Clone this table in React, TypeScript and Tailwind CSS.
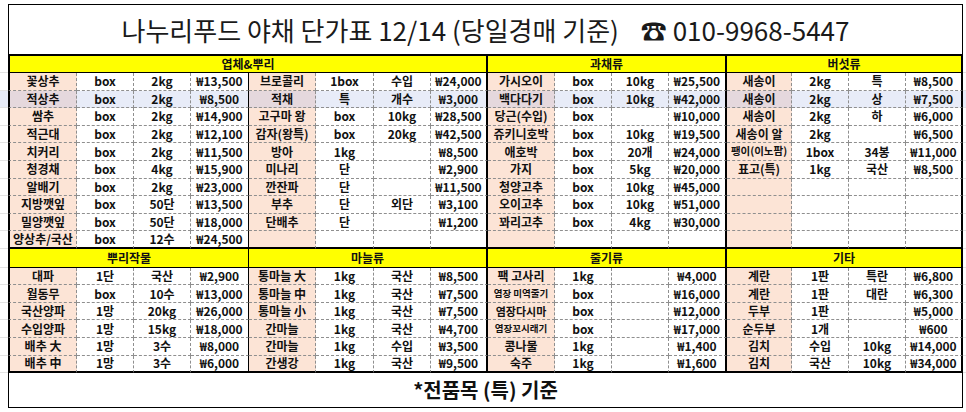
// price sheet – spreadsheet style
const W = [
  "w-[69px]", "w-[57px]", "w-[57px]", "w-[58px]",
  "w-[67px]", "w-[58px]", "w-[57px]", "w-[57px]",
  "w-[67px]", "w-[57px]", "w-[57px]", "w-[58px]",
  "w-[65px]", "w-[57px]", "w-[57px]", "w-[57px]",
];

const NAME_COLS = [0, 4, 8, 12];

// names that are squeezed into the cell with a smaller size
const SMALL: Record<string, string> = {
  "팽이(이노팜)": "text-[10.5px]",
  "염장 미역줄기": "text-[9.5px]",
  "염장꼬시래기": "text-[9.5px]",
  "염장다시마": "text-[11px]",
};

const top = [
  ["꽃상추", "box", "2kg", "₩13,500", "브로콜리", "1box", "수입", "₩24,000", "가시오이", "box", "10kg", "₩25,500", "새송이", "2kg", "특", "₩8,500"],
  ["적상추", "box", "2kg", "₩8,500", "적채", "특", "개수", "₩3,000", "백다다기", "box", "10kg", "₩42,000", "새송이", "2kg", "상", "₩7,500"],
  ["쌈추", "box", "2kg", "₩14,900", "고구마 왕", "box", "10kg", "₩28,500", "당근(수입)", "box", "", "₩10,000", "새송이", "2kg", "하", "₩6,000"],
  ["적근대", "box", "2kg", "₩12,100", "감자(왕특)", "box", "20kg", "₩42,500", "쥬키니호박", "box", "10kg", "₩19,500", "새송이 알", "2kg", "", "₩6,500"],
  ["치커리", "box", "2kg", "₩11,500", "방아", "1kg", "", "₩8,500", "애호박", "box", "20개", "₩24,000", "팽이(이노팜)", "1box", "34봉", "₩11,000"],
  ["청경채", "box", "4kg", "₩15,900", "미나리", "단", "", "₩2,900", "가지", "box", "5kg", "₩20,000", "표고(특)", "1kg", "국산", "₩8,500"],
  ["알배기", "box", "2kg", "₩23,000", "깐잔파", "단", "", "₩11,500", "청양고추", "box", "10kg", "₩45,000", "", "", "", ""],
  ["지방깻잎", "box", "50단", "₩13,500", "부추", "단", "외단", "₩3,100", "오이고추", "box", "10kg", "₩51,000", "", "", "", ""],
  ["밀양깻잎", "box", "50단", "₩18,000", "단배추", "단", "", "₩1,200", "꽈리고추", "box", "4kg", "₩30,000", "", "", "", ""],
  ["양상추/국산", "box", "12수", "₩24,500", "", "", "", "", "", "", "", "", "", "", "", ""],
];

const bottom = [
  ["대파", "1단", "국산", "₩2,900", "통마늘 大", "1kg", "국산", "₩8,500", "팩 고사리", "1kg", "", "₩4,000", "계란", "1판", "특란", "₩6,800"],
  ["월동무", "box", "10수", "₩13,000", "통마늘 中", "1kg", "국산", "₩7,500", "염장 미역줄기", "box", "", "₩16,000", "계란", "1판", "대란", "₩6,300"],
  ["국산양파", "1망", "20kg", "₩26,000", "통마늘 小", "1kg", "국산", "₩7,500", "염장다시마", "box", "", "₩12,000", "두부", "1판", "", "₩5,000"],
  ["수입양파", "1망", "15kg", "₩18,000", "간마늘", "1kg", "국산", "₩4,700", "염장꼬시래기", "box", "", "₩17,000", "순두부", "1개", "", "₩600"],
  ["배추 大", "1망", "3수", "₩8,000", "간마늘", "1kg", "수입", "₩3,500", "콩나물", "1kg", "", "₩1,400", "김치", "수입", "10kg", "₩14,000"],
  ["배추 中", "1망", "3수", "₩6,000", "간생강", "1kg", "국산", "₩9,500", "숙주", "1kg", "", "₩1,600", "김치", "국산", "10kg", "₩34,000"],
];

const rightBorder = (i: number) => {
  if (i === 3) return "border-r border-r-black [border-right-style:solid]";
  if (i === 7 || i === 11 || i === 15)
    return "border-r-2 border-r-black [border-right-style:solid]";
  return "border-r";
};

function Row({ cells, last, hl }: { cells: string[]; last?: boolean; hl?: boolean }) {
  return (
    <div className={`flex h-[17.6px] ${hl ? "bg-[#e8ecf8]" : ""}`}>
      <div className="w-[8px] shrink-0 border-b border-[#e3e3e3]" />
      {cells.map((c, i) => {
        const isName = NAME_COLS.includes(i);
        const bg = isName
          ? hl
            ? "bg-[#e5d8dd]"
            : "bg-[#fce4d6]"
          : hl
            ? "bg-[#e8ecf8]"
            : "bg-white";
        return (
          <div
            key={i}
            className={`${W[i]} ${bg} ${rightBorder(i)} ${
              i === 0 ? "border-l-2 border-l-black [border-left-style:solid]" : ""
            } ${
              last ? "border-b-2 border-b-black [border-bottom-style:solid]" : "border-b"
            } ${SMALL[c] ?? "text-[12px]"} shrink-0 flex items-center justify-center border-dashed border-[#8f8f8f] whitespace-nowrap overflow-hidden font-bold text-[#111] leading-none`}
          >
            {c}
          </div>
        );
      })}
      <div className="flex-1 border-b border-[#e3e3e3]" />
    </div>
  );
}

function Header({ items, first }: { items: { t: string; w: string; b: string }[]; first?: boolean }) {
  return (
    <div className={`flex ${first ? "h-[19px]" : "h-[18.7px]"}`}>
      <div className="w-[8px] shrink-0 border-b border-[#e3e3e3]" />
      {items.map((h, i) => (
        <div
          key={i}
          className={`${h.w} ${h.b} ${i === 0 ? "border-l-2" : ""} ${
            first ? "border-t-2" : ""
          } shrink-0 flex items-center justify-center bg-[#ffff00] border-b border-black text-[12px] font-bold text-[#111] leading-none`}
        >
          {h.t}
        </div>
      ))}
      <div className="flex-1 border-b border-[#e3e3e3]" />
    </div>
  );
}

export default function App() {
  return (
    <div className="w-[966px] h-[412px] bg-white overflow-hidden font-['Noto_Sans_CJK_KR','Noto_Sans',sans-serif]">
      <div className="h-[4px]" />
      {/* title */}
      <div className="ml-[8px] w-[955px] h-[50px] border-t border-x border-black flex items-center justify-center text-[26px] text-[#1a1a1a]">
        <span>나누리푸드 야채 단가표 12/14 (당일경매 기준)</span>
        <span className="ml-[22px]">☎ 010-9968-5447</span>
      </div>

      <Header
        first
        items={[
          { t: "엽체&뿌리", w: "w-[480px]", b: "border-r-2" },
          { t: "과채류", w: "w-[239px]", b: "border-r-2" },
          { t: "버섯류", w: "w-[236px]", b: "border-r-2" },
        ]}
      />
      {top.map((r, i) => (
        <Row key={i} cells={r} hl={i === 1} last={i === top.length - 1} />
      ))}

      <Header
        items={[
          { t: "뿌리작물", w: "w-[241px]", b: "border-r" },
          { t: "마늘류", w: "w-[239px]", b: "border-r-2" },
          { t: "줄기류", w: "w-[239px]", b: "border-r-2" },
          { t: "기타", w: "w-[236px]", b: "border-r-2" },
        ]}
      />
      {bottom.map((r, i) => (
        <Row key={i} cells={r} last={i === bottom.length - 1} />
      ))}

      {/* footer note */}
      <div className="ml-[8px] w-[955px] h-[35px] border-x border-b border-black flex items-center justify-center text-[20px] font-bold text-[#111]">
        *전품목 (특) 기준
      </div>
    </div>
  );
}
